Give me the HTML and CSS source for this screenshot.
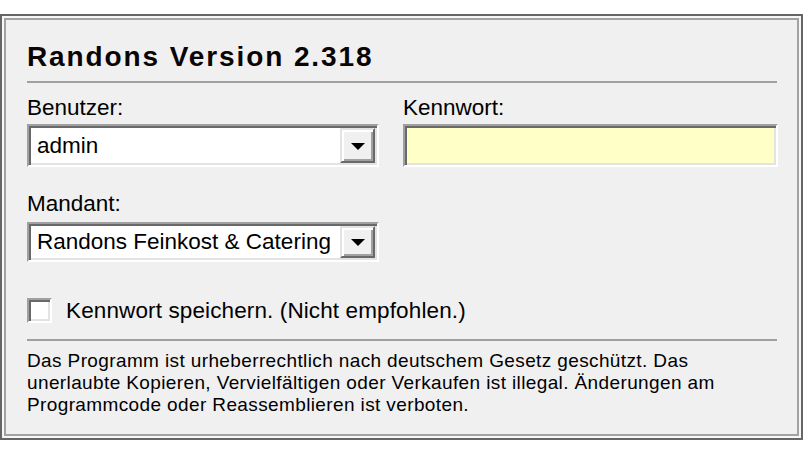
FILE: index.html
```html
<!DOCTYPE html>
<html lang="de">
<head>
<meta charset="utf-8">
<title>Randons Anmeldung</title>
<link rel="stylesheet" href="styles.css">
</head>
<body>
<div class="frame">
  <div class="inner">
    <h1 class="title">Randons Version 2.318</h1>
    <div class="sep"></div>
    <div class="row">
      <div class="col col-left">
        <div class="label">Benutzer:</div>
        <div class="combo combo-user">
          <span class="combo-text">admin</span>
          <span class="combo-btn"><i class="arrow"></i></span>
        </div>
        <div class="label label-mandant">Mandant:</div>
        <div class="combo combo-mandant">
          <span class="combo-text">Randons Feinkost &amp; Catering</span>
          <span class="combo-btn"><i class="arrow"></i></span>
        </div>
      </div>
      <div class="col col-right">
        <div class="label">Kennwort:</div>
        <div class="password"></div>
      </div>
    </div>
    <div class="check-row">
      <span class="checkbox"></span>
      <span class="check-label">Kennwort speichern. (Nicht empfohlen.)</span>
    </div>
    <div class="sep sep-2"></div>
    <p class="legal">Das Programm ist urheberrechtlich nach deutschem Gesetz geschützt. Das<br>unerlaubte Kopieren, Vervielfältigen oder Verkaufen ist illegal. Änderungen am<br>Programmcode oder Reassemblieren ist verboten.</p>
  </div>
</div>
</body>
</html>
```

FILE: styles.css
```css
html, body {
  margin: 0;
  padding: 0;
  background: #ffffff;
}

body {
  padding-top: 14px;
  font-family: "Liberation Sans", Arial, sans-serif;
  color: #000;
}

.frame {
  width: 803px;
  box-sizing: border-box;
  border: 2px solid #666666;
  padding: 2px;
  background: #f7f7f7;
}

.inner {
  border: 2px solid #a2a2a2;
  background: #f0f0f0;
  padding: 21px 18px 18px 21px;
}

.title {
  margin: 0;
  font-size: 28px;
  line-height: 32px;
  font-weight: bold;
  letter-spacing: 1.9px;
  color: #0a0505;
}

.sep {
  margin-top: 8px;
  width: 750px;
  height: 2px;
  background: #a0a0a0;
}

.row {
  display: flex;
  gap: 24px;
  width: 751px;
}

.col {
  display: flex;
  flex-direction: column;
}

.col-left { width: 352px; }
.col-right { width: 375px; }

.label {
  margin-top: 12px;
  font-size: 22.5px;
  line-height: 26px;
  white-space: nowrap;
}

.label-mandant {
  margin-top: 24px;
}

.combo {
  margin-top: 3px;
  box-sizing: border-box;
  height: 43px;
  display: flex;
  align-items: center;
  background: #fff;
  border-style: solid;
  border-width: 2px;
  border-color: #a0a0a0 #ffffff #ffffff #a0a0a0;
  box-shadow: inset 2px 2px 0 #696969, inset -2px -2px 0 #e3e3e3;
  padding: 2px;
}

.combo-mandant {
  margin-top: 5px;
  height: 40px;
}

.combo-text {
  flex: 1;
  padding-left: 6px;
  font-size: 22.5px;
  line-height: 26px;
  white-space: nowrap;
  overflow: hidden;
}

.combo-btn {
  width: 35px;
  align-self: stretch;
  box-sizing: border-box;
  background: #f0f0f0;
  border-style: solid;
  border-width: 2px;
  border-color: #e3e3e3 #696969 #696969 #e3e3e3;
  box-shadow: inset 2px 2px 0 #ffffff, inset -2px -2px 0 #a0a0a0;
  display: flex;
  align-items: center;
  justify-content: center;
}

.arrow {
  display: block;
  width: 0;
  height: 0;
  border-left: 7px solid transparent;
  border-right: 7px solid transparent;
  border-top: 7px solid #000;
  margin-top: 1px;
}

.password {
  margin-top: 3px;
  box-sizing: border-box;
  height: 43px;
  background: #ffffc8;
  border-style: solid;
  border-width: 2px;
  border-color: #a0a0a0 #ffffff #ffffff #a0a0a0;
  box-shadow: inset 2px 2px 0 #696969, inset -2px -2px 0 #e3e3e3;
}

.check-row {
  margin-top: 36px;
  display: flex;
  align-items: center;
  height: 25px;
}

.checkbox {
  width: 25px;
  height: 25px;
  box-sizing: border-box;
  background: #fff;
  border-style: solid;
  border-width: 2px;
  border-color: #a0a0a0 #ffffff #ffffff #a0a0a0;
  box-shadow: inset 2px 2px 0 #696969, inset -2px -2px 0 #e3e3e3;
}

.check-label {
  margin-left: 14px;
  font-size: 22.5px;
  line-height: 26px;
  letter-spacing: 0.12px;
  white-space: nowrap;
}

.sep-2 {
  margin-top: 16px;
}

.legal {
  margin: 9px 0 0 0;
  font-size: 19px;
  line-height: 22px;
  letter-spacing: 0.38px;
  white-space: nowrap;
}
```
